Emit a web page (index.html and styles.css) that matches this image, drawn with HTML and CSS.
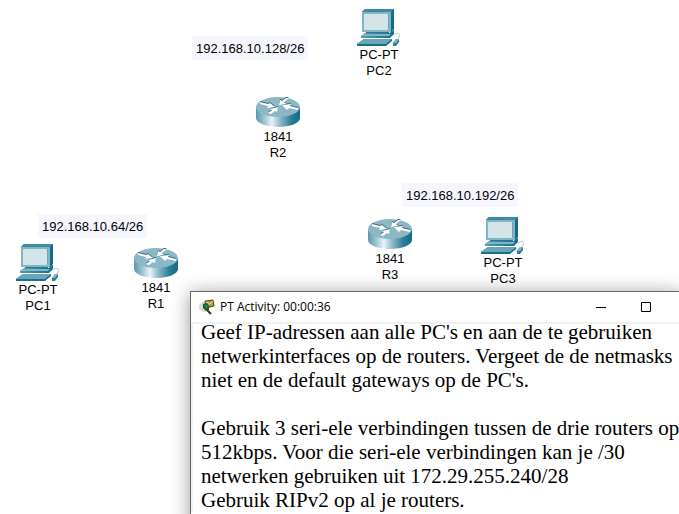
FILE: index.html
```
<!DOCTYPE html>
<html lang="nl">
<head>
<meta charset="utf-8">
<title>PT Activity</title>
<link rel="stylesheet" href="styles.css">
</head>
<body>
<svg class="defs" aria-hidden="true">
  <defs>
    <linearGradient id="metal" x1="0" x2="1" y1="0" y2="0">
      <stop offset="0" stop-color="#5798ac"/>
      <stop offset=".22" stop-color="#a9ccd7"/>
      <stop offset=".36" stop-color="#eaf4f7"/>
      <stop offset=".55" stop-color="#8dbac8"/>
      <stop offset=".8" stop-color="#2e7e96"/>
      <stop offset="1" stop-color="#126c86"/>
    </linearGradient>
    <linearGradient id="side" x1="0" x2="1" y1="0" y2="0">
      <stop offset="0" stop-color="#5b9bb1"/>
      <stop offset="1" stop-color="#0f6d88"/>
    </linearGradient>
    <symbol id="pc" viewBox="0 0 46 38">
      <path d="M6 4 9 1h29v20l-3 4z" fill="#0f6d88"/>
      <path d="M6 4 9 1h29l-3 3z" fill="#3f8aa2"/>
      <path d="M6 4h29v20H6z" fill="#83b5c6"/>
      <path d="M8 6h25v15H8z" fill="#6ca5b8"/>
      <rect x="8" y="6" width="24" height="16" rx="1" fill="#d4e5ea"/>
      <path d="M10 24h23v2H10z" fill="#247b94"/>
      <path d="M5 28 9 25h25l4-3v4l-4 4H5z" fill="url(#side)"/>
      <path d="M5 28 8 26h27l-2 2z" fill="#83b5c6"/>
      <path d="M1 36 8 31h28v2l-6 5H1z" fill="#16718b"/>
      <path d="M1 36 8 31h28l-6 5z" fill="#6ba5b8"/>
      <path d="M38 27c4-3 7-1 5 2l-2 3" fill="none" stroke="#b6c8ce"/>
      <path d="m37 35 3-4h3v3l-3 4h-3z" fill="#27809a"/>
      <path d="m37 35 3-4h3l-3 4z" fill="#7eb1c3"/>
    </symbol>
    <symbol id="router" viewBox="0 0 46 32">
      <path d="M1 11v11c0 5 10 9 22 9s22-4 22-9V11z" fill="url(#metal)"/>
      <ellipse cx="23" cy="11" rx="22" ry="10" fill="#8cb7c7"/>
      <g fill="#376a7b" transform="translate(0 -1)">
        <path d="m5 6 8 2 2-1 5 4-8 1 1-2-8-2z"/>
        <path d="m24 9 1-5 2 1 4-3h3l-5 4 2 2z"/>
        <path d="m43 14-9-2-2 2-5-5 9-1-1 2 8 2z"/>
        <path d="m13 17 4-3-2-1 8-2-1 5-2-1-4 3z"/>
      </g>
      <g fill="#fff">
        <path d="m5 6 8 2 2-1 5 4-8 1 1-2-8-2z"/>
        <path d="m24 9 1-5 2 1 4-3h3l-5 4 2 2z"/>
        <path d="m43 14-9-2-2 2-5-5 9-1-1 2 8 2z"/>
        <path d="m13 17 4-3-2-1 8-2-1 5-2-1-4 3z"/>
      </g>
    </symbol>
  </defs>
</svg>
<main class="workspace">
  <p class="note note-128">192.168.10.128/26</p>
  <p class="note note-64">192.168.10.64/26</p>
  <p class="note note-192">192.168.10.192/26</p>

  <figure class="device pc1"><svg class="pc-icon" aria-hidden="true"><use href="#pc"/></svg><figcaption>PC-PT<br>PC1</figcaption></figure>
  <figure class="device pc2"><svg class="pc-icon" aria-hidden="true"><use href="#pc"/></svg><figcaption>PC-PT<br>PC2</figcaption></figure>
  <figure class="device pc3"><svg class="pc-icon" aria-hidden="true"><use href="#pc"/></svg><figcaption>PC-PT<br>PC3</figcaption></figure>
  <figure class="device r1"><svg class="router-icon" aria-hidden="true"><use href="#router"/></svg><figcaption>1841<br>R1</figcaption></figure>
  <figure class="device r2"><svg class="router-icon" aria-hidden="true"><use href="#router"/></svg><figcaption>1841<br>R2</figcaption></figure>
  <figure class="device r3"><svg class="router-icon" aria-hidden="true"><use href="#router"/></svg><figcaption>1841<br>R3</figcaption></figure>

  <section class="window" aria-labelledby="window-title">
    <header class="titlebar">
      <svg class="app-icon" viewBox="0 0 16 16" aria-hidden="true">
        <circle cx="5" cy="8" r="5" fill="#d5d8d6"/>
        <path d="m6 2 8-1 1 6-8 2z" fill="#b69a4a" stroke="#4d461f"/>
        <path d="m7 3 4 2 3-3" fill="none" stroke="#efd88a"/>
        <path d="m4 5 4-1 2 3v4l-3 1-3-3z" fill="#14612b"/>
        <path d="m6 6 2 1-1 2" fill="none" stroke="#49a34f"/>
        <path d="m8 11 4 4" stroke="#333" stroke-width="2"/>
      </svg>
      <h1 id="window-title">PT Activity: 00:00:36</h1>
      <button type="button" aria-label="Minimaliseren"><svg viewBox="0 0 10 10" aria-hidden="true"><path d="M0 5.500h10" stroke="#000"/></svg></button>
      <button type="button" aria-label="Maximaliseren"><svg viewBox="0 0 10 10" aria-hidden="true"><path d="M.5.500h9v9h-9z" fill="none" stroke="#000"/></svg></button>
    </header>
    <div class="instructions">
      <p>Geef IP-adressen aan alle PC's en aan de te gebruiken<br>netwerkinterfaces op de routers. Vergeet de de netmasks<br>niet en de default gateways op de PC's.</p>
      <p>Gebruik 3 seri-ele verbindingen tussen de drie routers op<br>512kbps. Voor die seri-ele verbindingen kan je /30<br>netwerken gebruiken uit 172.29.255.240/28<br>Gebruik RIPv2 op al je routers.</p>
    </div>
  </section>
</main>
</body>
</html>
```
FILE: styles.css
```
* { box-sizing: border-box; }
body { margin: 0; background: #fff; color: #000; font-family: "Liberation Sans", Arial, sans-serif; }
p, h1, figure { margin: 0; }
.defs { position: absolute; width: 0; height: 0; }

.workspace { position: relative; min-height: 100vh; overflow: hidden; font-size: 13px; line-height: 16px; }

.note { position: absolute; padding: 5px 4px 3px; background: #f6f7fe; white-space: nowrap; }
.note-128 { left: 192px; top: 36px; }
.note-64 { left: 38px; top: 214px; }
.note-192 { left: 402px; top: 183px; }

.device { position: absolute; display: flex; flex-direction: column; align-items: center; gap: 1px; width: 46px; text-align: center; }
.device svg { display: block; width: 46px; }
.pc-icon { height: 38px; }
.router-icon { height: 32px; }
.pc1 { left: 15px; top: 243px; }
.pc2 { left: 356px; top: 8px; }
.pc3 { left: 480px; top: 216px; }
.r1 { left: 133px; top: 247px; }
.r2 { left: 255px; top: 96px; }
.r3 { left: 367px; top: 218px; }

.window {
  position: absolute;
  top: 291px;
  right: -2px;
  bottom: -16px;
  left: 190px;
  border: 1px solid #666;
  background: #fff;
  box-shadow: 0 2px 18px rgba(0, 0, 0, .4);
}
.titlebar { display: flex; align-items: center; height: 30px; padding: 0 12px 0 8px; }
.app-icon { width: 16px; height: 16px; margin-right: 5px; }
.titlebar h1 { flex: 1; font: 12px/16px "Open Sans", "Segoe UI", sans-serif; }
.titlebar button { display: grid; place-items: center; width: 45px; height: 30px; padding: 0; border: 0; background: none; }
.titlebar button svg { width: 10px; height: 10px; }
.instructions {
  padding-left: 8px;
  border: solid #f0f0f0;
  border-width: 2px 0 0 2px;
  font: 21px/24px "Liberation Serif", "Times New Roman", serif;
  white-space: nowrap;
}
.instructions p:first-child { margin-top: -4px; }
.instructions p + p { margin-top: 24px; }
```
